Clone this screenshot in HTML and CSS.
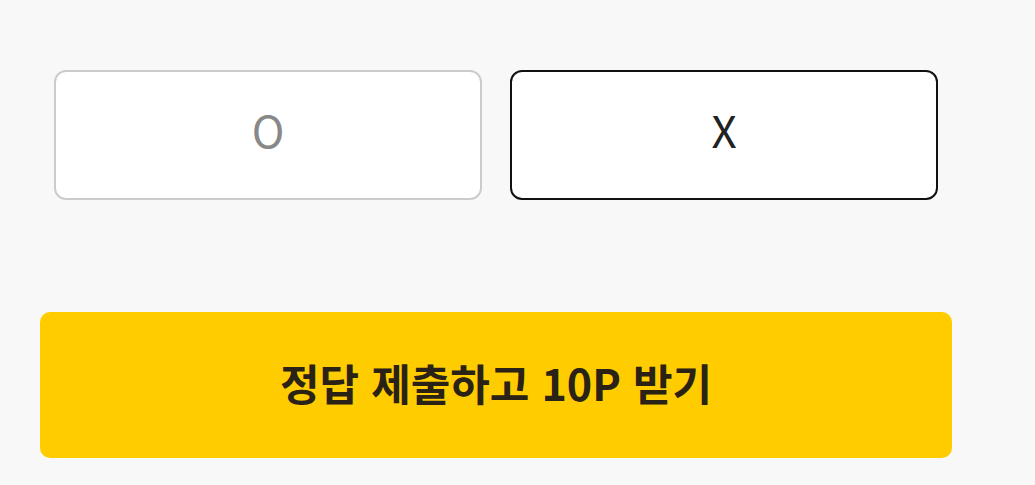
FILE: index.html
```html
<!DOCTYPE html>
<html lang="ko">
<head>
<meta charset="utf-8">
<link rel="stylesheet" href="styles.css">
</head>
<body>
<div class="page">
  <div class="choices">
    <button class="choice choice-o">O</button>
    <button class="choice choice-x">X</button>
  </div>
  <button class="submit">정답 제출하고 10P 받기</button>
</div>
</body>
</html>
```
FILE: styles.css
```css
html, body {
  margin: 0;
  padding: 0;
  background: #f8f8f8;
}
.page {
  width: 912px;
  padding: 70px 0 0 40px;
  font-family: "Noto Sans CJK KR", "Noto Sans", sans-serif;
}
.choices {
  display: flex;
  gap: 28px;
  padding: 0 14px;
}
.choice {
  flex: 1;
  height: 130px;
  background: #fff;
  border-radius: 12px;
  font-family: "Noto Sans CJK KR", "Noto Sans", sans-serif;
  font-size: 44px;
  font-weight: 400;
  padding: 0 0 12px;
  line-height: 1;
}
.choice-o {
  border: 2px solid #cccccc;
  color: #888888;
}
.choice-x {
  border: 2px solid #111111;
  color: #222222;
}
.submit {
  display: block;
  width: 912px;
  height: 146px;
  margin-top: 112px;
  border: none;
  border-radius: 10px;
  background: #ffcc00;
  color: #2a2215;
  font-family: "Noto Sans CJK KR", "Noto Sans", sans-serif;
  font-size: 43px;
  font-weight: 700;
  padding: 0 0 6px;
}
```
